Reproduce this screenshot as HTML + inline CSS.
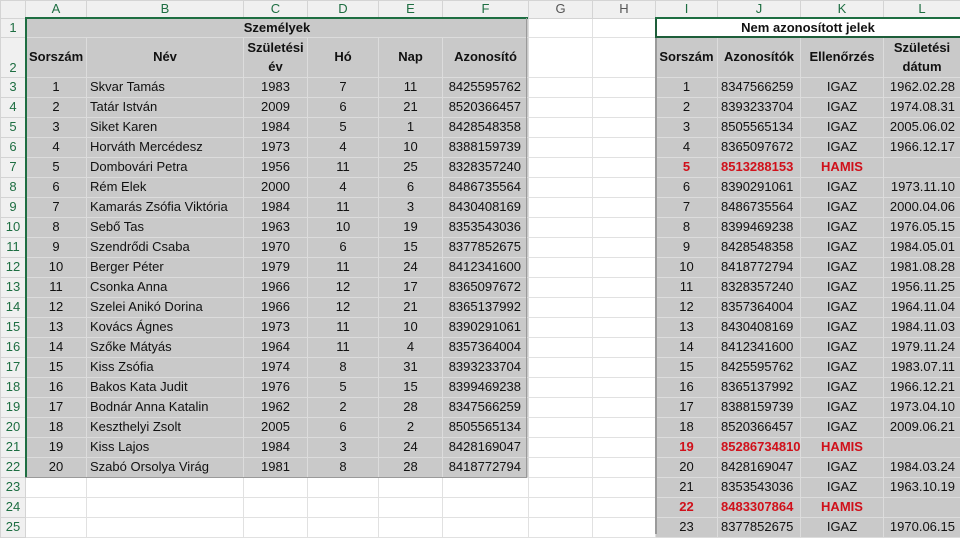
<!DOCTYPE html>
<html><head><meta charset="utf-8"><style>
*{margin:0;padding:0;box-sizing:border-box}
body{width:960px;height:534px;overflow:hidden;background:#fff;font-family:"Liberation Sans",Arial,sans-serif;font-size:13px;color:#111;position:relative}
table{border-collapse:collapse;table-layout:fixed;width:960px;position:absolute;left:0;top:0}
td{border:1px solid #e1e1e1;height:20px;padding:0 3px;white-space:nowrap;overflow:hidden;line-height:18px}
tr.h td{height:17px;line-height:16px;background:#f0f0f0;border-color:#d4d4d4;text-align:center;color:#555;font-size:13px}
tr.h td.s{color:#1e6e42}
tr.r1 td{height:19px;line-height:17px}
td.n{background:#f0f0f0;border-color:#d4d4d4;text-align:center;color:#1e6e42;padding:0}
td.g{background:#c9c9c9;border-color:#dcdcdc}
.c{text-align:center}.r{text-align:right}.b{font-weight:bold}
td.f{padding-right:7px}
td.l{padding-right:5px}
.red{color:#d0101a;font-weight:bold}
tr.t2 td{height:40px}
</style></head><body>
<table>
<colgroup><col style="width:25px"><col style="width:61px"><col style="width:157px"><col style="width:64px"><col style="width:71px"><col style="width:64px"><col style="width:86px"><col style="width:64px"><col style="width:63px"><col style="width:62px"><col style="width:83px"><col style="width:83px"><col style="width:77px"></colgroup>
<tr class="h"><td></td><td class="s">A</td><td class="s">B</td><td class="s">C</td><td class="s">D</td><td class="s">E</td><td class="s">F</td><td>G</td><td>H</td><td class="s">I</td><td class="s">J</td><td class="s">K</td><td class="s">L</td></tr>
<tr class="r1"><td class="n">1</td><td class="g c b" colspan="6">Személyek</td><td></td><td></td><td colspan="4" class="c b" style="border:2px solid #1e5e3a">Nem azonosított jelek</td></tr>
<tr class="t2"><td class="n" style="vertical-align:bottom">2</td><td class="g c b">Sorszám</td><td class="g c b">Név</td><td class="g c b" style="white-space:normal;line-height:19px">Születési év</td><td class="g c b">Hó</td><td class="g c b">Nap</td><td class="g c b">Azonosító</td><td></td><td></td><td class="g c b">Sorszám</td><td class="g c b">Azonosítók</td><td class="g c b">Ellenőrzés</td><td class="g c b" style="white-space:normal;line-height:19px">Születési dátum</td></tr>
<tr><td class="n">3</td><td class="g c">1</td><td class="g">Skvar Tamás</td><td class="g c">1983</td><td class="g c">7</td><td class="g c">11</td><td class="g r f">8425595762</td><td></td><td></td><td class="g c">1</td><td class="g">8347566259</td><td class="g c">IGAZ</td><td class="g r l">1962.02.28</td></tr>
<tr><td class="n">4</td><td class="g c">2</td><td class="g">Tatár István</td><td class="g c">2009</td><td class="g c">6</td><td class="g c">21</td><td class="g r f">8520366457</td><td></td><td></td><td class="g c">2</td><td class="g">8393233704</td><td class="g c">IGAZ</td><td class="g r l">1974.08.31</td></tr>
<tr><td class="n">5</td><td class="g c">3</td><td class="g">Siket Karen</td><td class="g c">1984</td><td class="g c">5</td><td class="g c">1</td><td class="g r f">8428548358</td><td></td><td></td><td class="g c">3</td><td class="g">8505565134</td><td class="g c">IGAZ</td><td class="g r l">2005.06.02</td></tr>
<tr><td class="n">6</td><td class="g c">4</td><td class="g">Horváth Mercédesz</td><td class="g c">1973</td><td class="g c">4</td><td class="g c">10</td><td class="g r f">8388159739</td><td></td><td></td><td class="g c">4</td><td class="g">8365097672</td><td class="g c">IGAZ</td><td class="g r l">1966.12.17</td></tr>
<tr><td class="n">7</td><td class="g c">5</td><td class="g">Dombovári Petra</td><td class="g c">1956</td><td class="g c">11</td><td class="g c">25</td><td class="g r f">8328357240</td><td></td><td></td><td class="g c red">5</td><td class="g red">8513288153</td><td class="g c red">HAMIS</td><td class="g r l"></td></tr>
<tr><td class="n">8</td><td class="g c">6</td><td class="g">Rém Elek</td><td class="g c">2000</td><td class="g c">4</td><td class="g c">6</td><td class="g r f">8486735564</td><td></td><td></td><td class="g c">6</td><td class="g">8390291061</td><td class="g c">IGAZ</td><td class="g r l">1973.11.10</td></tr>
<tr><td class="n">9</td><td class="g c">7</td><td class="g">Kamarás Zsófia Viktória</td><td class="g c">1984</td><td class="g c">11</td><td class="g c">3</td><td class="g r f">8430408169</td><td></td><td></td><td class="g c">7</td><td class="g">8486735564</td><td class="g c">IGAZ</td><td class="g r l">2000.04.06</td></tr>
<tr><td class="n">10</td><td class="g c">8</td><td class="g">Sebő Tas</td><td class="g c">1963</td><td class="g c">10</td><td class="g c">19</td><td class="g r f">8353543036</td><td></td><td></td><td class="g c">8</td><td class="g">8399469238</td><td class="g c">IGAZ</td><td class="g r l">1976.05.15</td></tr>
<tr><td class="n">11</td><td class="g c">9</td><td class="g">Szendrődi Csaba</td><td class="g c">1970</td><td class="g c">6</td><td class="g c">15</td><td class="g r f">8377852675</td><td></td><td></td><td class="g c">9</td><td class="g">8428548358</td><td class="g c">IGAZ</td><td class="g r l">1984.05.01</td></tr>
<tr><td class="n">12</td><td class="g c">10</td><td class="g">Berger Péter</td><td class="g c">1979</td><td class="g c">11</td><td class="g c">24</td><td class="g r f">8412341600</td><td></td><td></td><td class="g c">10</td><td class="g">8418772794</td><td class="g c">IGAZ</td><td class="g r l">1981.08.28</td></tr>
<tr><td class="n">13</td><td class="g c">11</td><td class="g">Csonka Anna</td><td class="g c">1966</td><td class="g c">12</td><td class="g c">17</td><td class="g r f">8365097672</td><td></td><td></td><td class="g c">11</td><td class="g">8328357240</td><td class="g c">IGAZ</td><td class="g r l">1956.11.25</td></tr>
<tr><td class="n">14</td><td class="g c">12</td><td class="g">Szelei Anikó Dorina</td><td class="g c">1966</td><td class="g c">12</td><td class="g c">21</td><td class="g r f">8365137992</td><td></td><td></td><td class="g c">12</td><td class="g">8357364004</td><td class="g c">IGAZ</td><td class="g r l">1964.11.04</td></tr>
<tr><td class="n">15</td><td class="g c">13</td><td class="g">Kovács Ágnes</td><td class="g c">1973</td><td class="g c">11</td><td class="g c">10</td><td class="g r f">8390291061</td><td></td><td></td><td class="g c">13</td><td class="g">8430408169</td><td class="g c">IGAZ</td><td class="g r l">1984.11.03</td></tr>
<tr><td class="n">16</td><td class="g c">14</td><td class="g">Szőke Mátyás</td><td class="g c">1964</td><td class="g c">11</td><td class="g c">4</td><td class="g r f">8357364004</td><td></td><td></td><td class="g c">14</td><td class="g">8412341600</td><td class="g c">IGAZ</td><td class="g r l">1979.11.24</td></tr>
<tr><td class="n">17</td><td class="g c">15</td><td class="g">Kiss Zsófia</td><td class="g c">1974</td><td class="g c">8</td><td class="g c">31</td><td class="g r f">8393233704</td><td></td><td></td><td class="g c">15</td><td class="g">8425595762</td><td class="g c">IGAZ</td><td class="g r l">1983.07.11</td></tr>
<tr><td class="n">18</td><td class="g c">16</td><td class="g">Bakos Kata Judit</td><td class="g c">1976</td><td class="g c">5</td><td class="g c">15</td><td class="g r f">8399469238</td><td></td><td></td><td class="g c">16</td><td class="g">8365137992</td><td class="g c">IGAZ</td><td class="g r l">1966.12.21</td></tr>
<tr><td class="n">19</td><td class="g c">17</td><td class="g">Bodnár Anna Katalin</td><td class="g c">1962</td><td class="g c">2</td><td class="g c">28</td><td class="g r f">8347566259</td><td></td><td></td><td class="g c">17</td><td class="g">8388159739</td><td class="g c">IGAZ</td><td class="g r l">1973.04.10</td></tr>
<tr><td class="n">20</td><td class="g c">18</td><td class="g">Keszthelyi Zsolt</td><td class="g c">2005</td><td class="g c">6</td><td class="g c">2</td><td class="g r f">8505565134</td><td></td><td></td><td class="g c">18</td><td class="g">8520366457</td><td class="g c">IGAZ</td><td class="g r l">2009.06.21</td></tr>
<tr><td class="n">21</td><td class="g c">19</td><td class="g">Kiss Lajos</td><td class="g c">1984</td><td class="g c">3</td><td class="g c">24</td><td class="g r f">8428169047</td><td></td><td></td><td class="g c red">19</td><td class="g red">85286734810</td><td class="g c red">HAMIS</td><td class="g r l"></td></tr>
<tr><td class="n">22</td><td class="g c">20</td><td class="g">Szabó Orsolya Virág</td><td class="g c">1981</td><td class="g c">8</td><td class="g c">28</td><td class="g r f">8418772794</td><td></td><td></td><td class="g c">20</td><td class="g">8428169047</td><td class="g c">IGAZ</td><td class="g r l">1984.03.24</td></tr>
<tr><td class="n">23</td><td></td><td></td><td></td><td></td><td></td><td></td><td></td><td></td><td class="g c">21</td><td class="g">8353543036</td><td class="g c">IGAZ</td><td class="g r l">1963.10.19</td></tr>
<tr><td class="n">24</td><td></td><td></td><td></td><td></td><td></td><td></td><td></td><td></td><td class="g c red">22</td><td class="g red">8483307864</td><td class="g c red">HAMIS</td><td class="g r l"></td></tr>
<tr><td class="n">25</td><td></td><td></td><td></td><td></td><td></td><td></td><td></td><td></td><td class="g c">23</td><td class="g">8377852675</td><td class="g c">IGAZ</td><td class="g r l">1970.06.15</td></tr>
</table>
<div style="position:absolute;left:25px;top:17px;width:503px;height:2px;background:#1e6e42"></div>
<div style="position:absolute;left:655px;top:17px;width:305px;height:2px;background:#1e6e42"></div>
<div style="position:absolute;left:25px;top:18px;width:2px;height:460px;background:#1e6e42"></div>
<div style="position:absolute;left:526px;top:18px;width:1px;height:460px;background:#9a9a9a"></div>
<div style="position:absolute;left:25px;top:477px;width:502px;height:1px;background:#9a9a9a"></div>
<div style="position:absolute;left:655px;top:38px;width:2px;height:496px;background:#9a9a9a"></div>
</body></html>
